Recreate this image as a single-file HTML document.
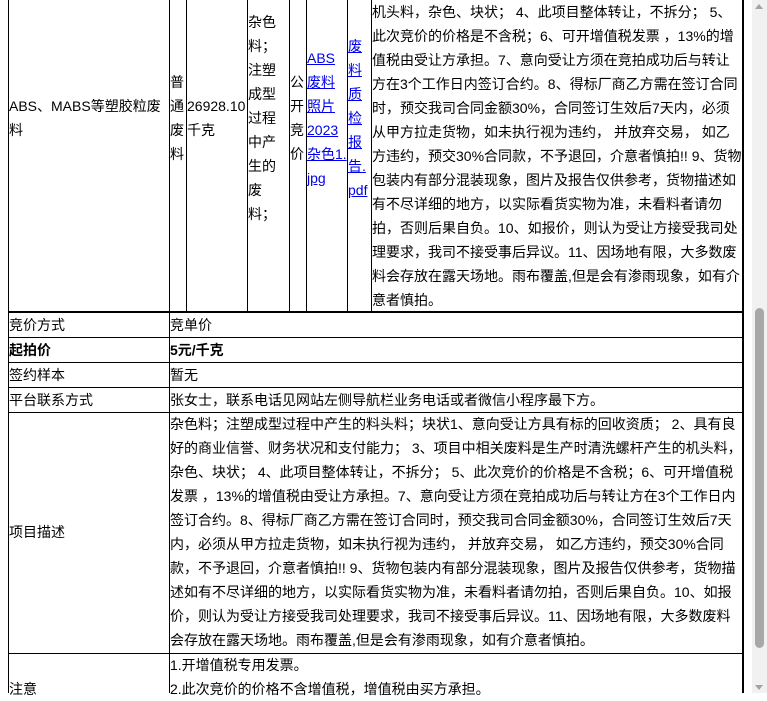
<!DOCTYPE html>
<html><head><meta charset="utf-8"><style>
*{margin:0;padding:0;box-sizing:border-box}
body{width:767px;height:693px;overflow:hidden;background:#fff;font-family:"Liberation Sans","Noto Sans CJK SC",sans-serif;font-size:14px;color:#000;position:relative}
.t{position:absolute;line-height:24px;white-space:nowrap}
.v{position:absolute;background:#000;width:1px}
.h{position:absolute;background:#000;height:1px}
a{color:#00e;text-decoration:underline}
b{font-weight:bold}
</style></head><body>
<!-- vertical lines -->
<div class="v" style="left:8px;top:0;height:693px"></div>
<div class="v" style="left:169px;top:0;height:693px"></div>
<div class="v" style="left:186px;top:0;height:312px"></div>
<div class="v" style="left:247px;top:0;height:312px"></div>
<div class="v" style="left:289px;top:0;height:312px"></div>
<div class="v" style="left:306px;top:0;height:312px"></div>
<div class="v" style="left:347px;top:0;height:312px"></div>
<div class="v" style="left:371px;top:0;height:312px"></div>
<div class="v" style="left:742px;top:0;height:693px;width:2px"></div>
<!-- horizontal lines -->
<div class="h" style="left:8px;top:311px;width:736px;height:2px"></div>
<div class="h" style="left:8px;top:337px;width:735px"></div>
<div class="h" style="left:8px;top:362px;width:735px"></div>
<div class="h" style="left:8px;top:387px;width:735px"></div>
<div class="h" style="left:8px;top:412px;width:735px"></div>
<div class="h" style="left:8px;top:653px;width:735px"></div>

<div class="t" style="left:9px;top:94px">ABS、MABS等塑胶粒废<br>料</div>
<div class="t" style="left:170px;top:70px">普<br>通<br>废<br>料</div>
<div class="t" style="left:187px;top:94px">26928.10<br>千克</div>
<div class="t" style="left:248px;top:10px">杂色<br>料；<br>注塑<br>成型<br>过程<br>中产<br>生的<br>废<br>料；</div>
<div class="t" style="left:290px;top:70px">公<br>开<br>竞<br>价</div>
<div class="t" style="left:307px;top:46px"><a>ABS<br>废料<br>照片<br>2023<br>杂色1.<br>jpg</a></div>
<div class="t" style="left:348px;top:34px"><a>废<br>料<br>质<br>检<br>报<br>告.<br>pdf</a></div>
<div class="t" style="left:372px;top:0px">机头料，杂色、块状； 4、此项目整体转让，不拆分； 5、<br>此次竞价的价格是不含税；6、可开增值税发票 ，13%的增<br>值税由受让方承担。7、意向受让方须在竞拍成功后与转让<br>方在3个工作日内签订合约。8、得标厂商乙方需在签订合同<br>时，预交我司合同金额30%，合同签订生效后7天内，必须<br>从甲方拉走货物，如未执行视为违约， 并放弃交易， 如乙<br>方违约，预交30%合同款，不予退回，介意者慎拍!! 9、货物<br>包装内有部分混装现象，图片及报告仅供参考，货物描述如<br>有不尽详细的地方，以实际看货实物为准，未看料者请勿<br>拍，否则后果自负。10、如报价，则认为受让方接受我司处<br>理要求，我司不接受事后异议。11、因场地有限，大多数废<br>料会存放在露天场地。雨布覆盖,但是会有渗雨现象，如有介<br>意者慎拍。</div>

<div class="t" style="left:9px;top:313px">竞价方式</div>
<div class="t" style="left:170px;top:313px">竞单价</div>
<div class="t" style="left:9px;top:338px"><b>起拍价</b></div>
<div class="t" style="left:170px;top:338px"><b>5元/千克</b></div>
<div class="t" style="left:9px;top:363px">签约样本</div>
<div class="t" style="left:170px;top:363px">暂无</div>
<div class="t" style="left:9px;top:388px">平台联系方式</div>
<div class="t" style="left:170px;top:388px">张女士，联系电话见网站左侧导航栏业务电话或者微信小程序最下方。</div>
<div class="t" style="left:9px;top:520px">项目描述</div>
<div class="t" style="left:170px;top:412px">杂色料；注塑成型过程中产生的料头料；块状1、意向受让方具有标的回收资质； 2、具有良<br>好的商业信誉、财务状况和支付能力； 3、项目中相关废料是生产时清洗螺杆产生的机头料，<br>杂色、块状； 4、此项目整体转让，不拆分； 5、此次竞价的价格是不含税；6、可开增值税<br>发票 ，13%的增值税由受让方承担。7、意向受让方须在竞拍成功后与转让方在3个工作日内<br>签订合约。8、得标厂商乙方需在签订合同时，预交我司合同金额30%，合同签订生效后7天<br>内，必须从甲方拉走货物，如未执行视为违约， 并放弃交易， 如乙方违约，预交30%合同<br>款，不予退回，介意者慎拍!! 9、货物包装内有部分混装现象，图片及报告仅供参考，货物描<br>述如有不尽详细的地方，以实际看货实物为准，未看料者请勿拍，否则后果自负。10、如报<br>价，则认为受让方接受我司处理要求，我司不接受事后异议。11、因场地有限，大多数废料<br>会存放在露天场地。雨布覆盖,但是会有渗雨现象，如有介意者慎拍。</div>
<div class="t" style="left:9px;top:677px">注意</div>
<div class="t" style="left:170px;top:653px">1.开增值税专用发票。<br>2.此次竞价的价格不含增值税，增值税由买方承担。</div>

<!-- scrollbar -->
<div style="position:absolute;left:752px;top:0;width:15px;height:693px;background:#f1f1f1"></div>
<div style="position:absolute;left:755px;top:4px;width:0;height:0;border-left:4px solid transparent;border-right:4px solid transparent;border-bottom:5px solid #a3a3a3"></div>
<div style="position:absolute;left:755px;top:308px;width:9px;height:340px;background:#a8a8a8;border-radius:5px"></div>
<div style="position:absolute;left:755px;top:685px;width:0;height:0;border-left:4px solid transparent;border-right:4px solid transparent;border-top:5px solid #a3a3a3"></div>
</body></html>
